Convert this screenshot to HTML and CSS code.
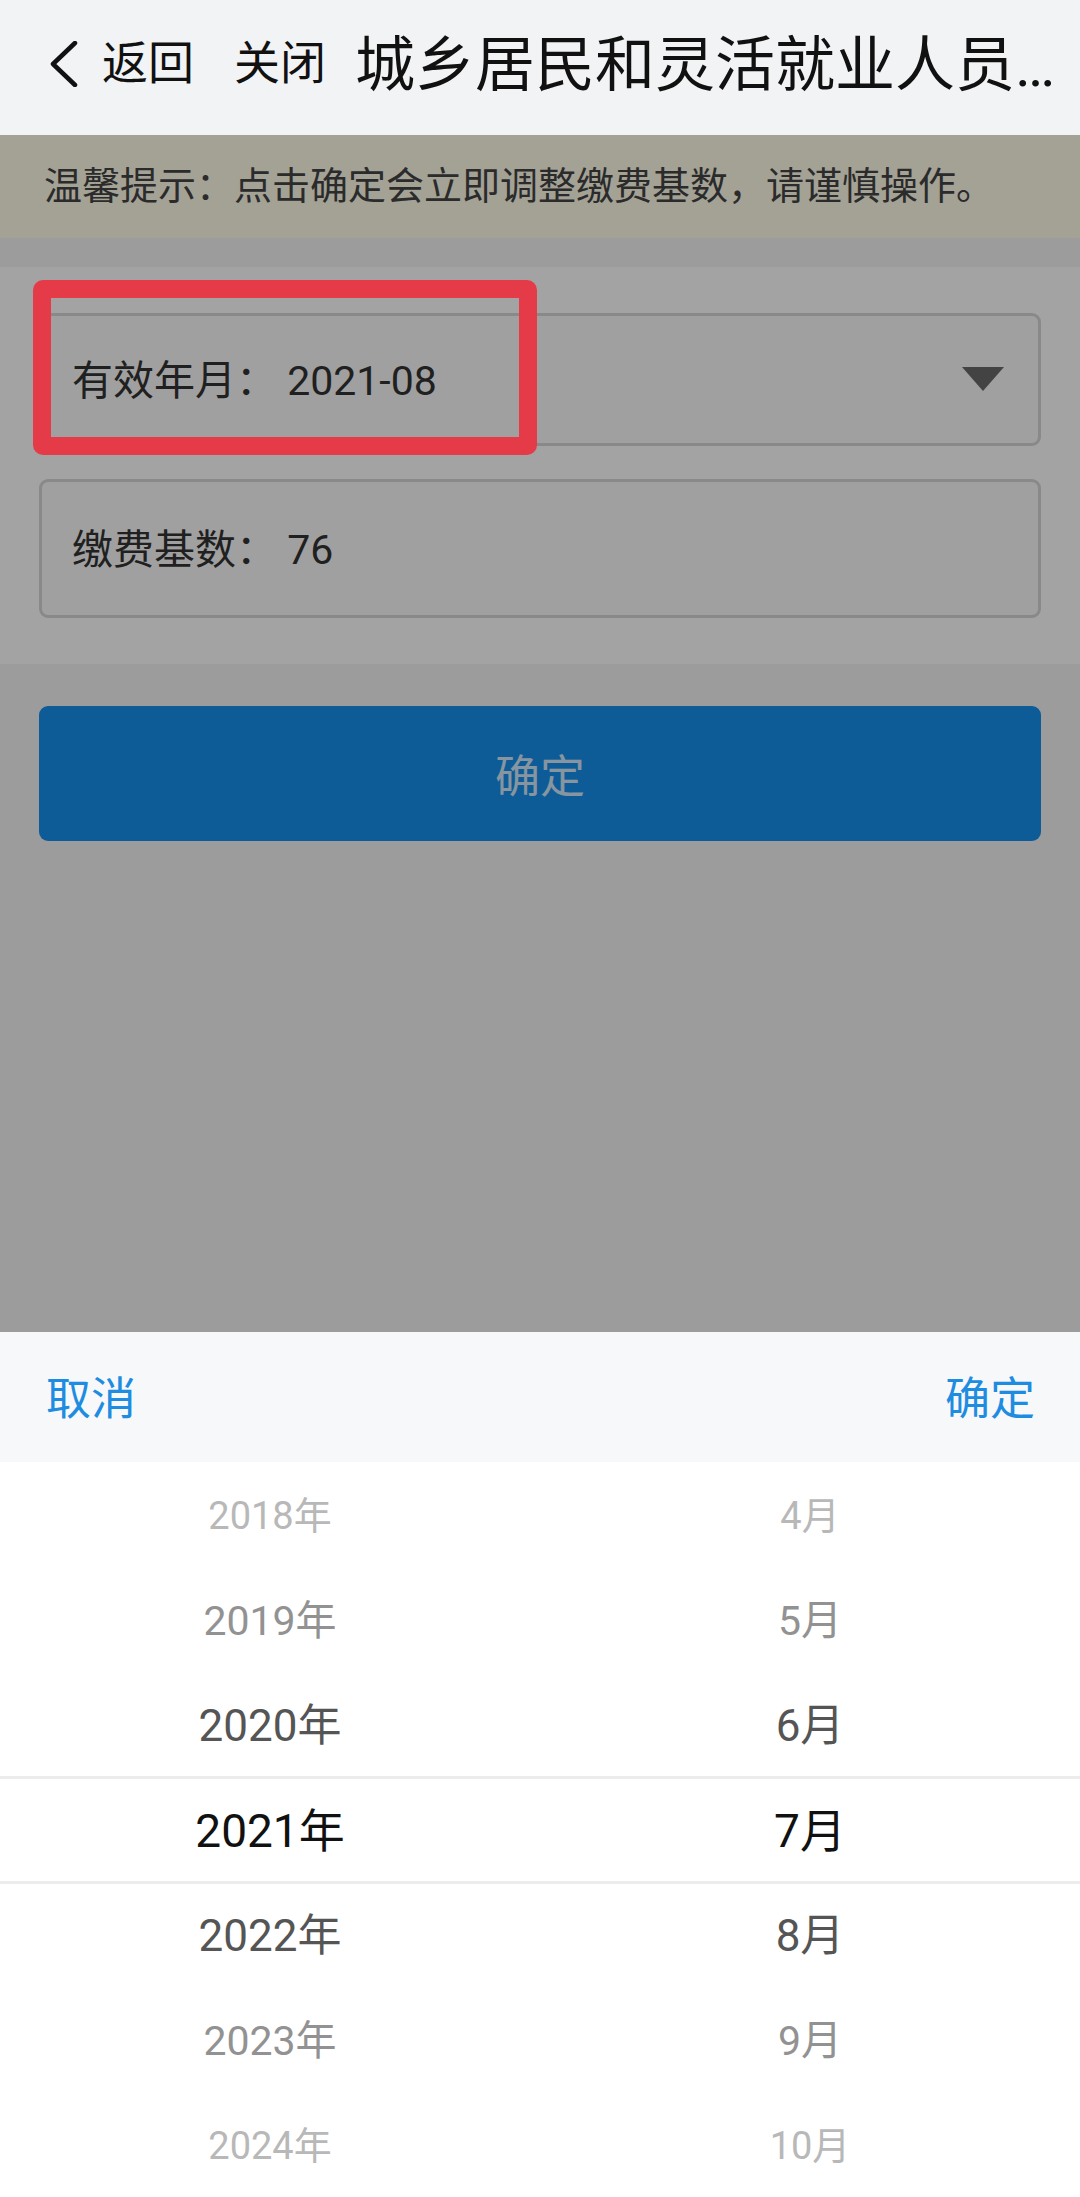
FILE: index.html
```html
<!DOCTYPE html>
<html lang="zh-CN">
<head>
<meta charset="utf-8">
<title>缴费基数调整</title>
<link rel="stylesheet" href="styles.css">
</head>
<body>
<header class="nav">
  <svg class="nav-back-icon" viewBox="0 0 30 46" width="30" height="46" aria-hidden="true">
    <polyline points="27,2 5,23 27,44" fill="none" stroke="#111" stroke-width="4.5" stroke-linecap="round" stroke-linejoin="round"/>
  </svg>
  <span class="nav-link nav-back">返回</span>
  <span class="nav-link nav-close">关闭</span>
  <h1 class="nav-title">城乡居民和灵活就业人员…</h1>
</header>

<main class="page">
  <div class="notice">温馨提示：点击确定会立即调整缴费基数，请谨慎操作。</div>

  <section class="form">
    <div class="field field-select">
      <span class="field-text">有效年月： 2021-08</span>
      <span class="caret"></span>
    </div>
    <div class="field field-input">
      <span class="field-text">缴费基数： 76</span>
    </div>
  </section>

  <div class="actions">
    <button class="btn-primary" type="button">确定</button>
  </div>
</main>

<div class="mask"></div>
<div class="highlight"></div>

<div class="sheet">
  <div class="sheet-toolbar">
    <span class="sheet-btn">取消</span>
    <span class="sheet-btn">确定</span>
  </div>
  <div class="wheels">
    <ul class="wheel">
      <li class="w3">2018年</li>
      <li class="w2">2019年</li>
      <li class="w1">2020年</li>
      <li class="w0">2021年</li>
      <li class="w1">2022年</li>
      <li class="w2">2023年</li>
      <li class="w3">2024年</li>
    </ul>
    <ul class="wheel">
      <li class="w3">4月</li>
      <li class="w2">5月</li>
      <li class="w1">6月</li>
      <li class="w0">7月</li>
      <li class="w1">8月</li>
      <li class="w2">9月</li>
      <li class="w3">10月</li>
    </ul>
    <div class="wheel-indicator"></div>
  </div>
</div>
</body>
</html>
```

FILE: styles.css
```css
* { box-sizing: border-box; }

html, body {
  margin: 0;
  padding: 0;
}

body {
  width: 1080px;
  height: 2197px;
  overflow: hidden;
  background: #f5f5f5;
  font-family: Roboto, "Noto Sans CJK SC", sans-serif;
  color: #333;
}

/* ---------- top navigation ---------- */
.nav {
  height: 135px;
  background: #f2f3f5;
  display: flex;
  align-items: center;
  padding: 0 16px 4px 48px;
  color: #111;
}

.nav-back-icon {
  flex: none;
  display: block;
  margin-bottom: 4px;
}

.nav-link {
  flex: none;
  font-size: 46px;
  line-height: 1;
  margin-bottom: 5px;
}

.nav-back { margin-left: 24px; }
.nav-close { margin-left: 40px; }

.nav-title {
  margin: 0 0 0 29px;
  flex: 1;
  min-width: 0;
  font-size: 60px;
  font-weight: 400;
  line-height: 1.2;
  white-space: nowrap;
}

/* ---------- page content (under mask) ---------- */
.page {
  display: flex;
  flex-direction: column;
}

.notice {
  height: 103px;
  background: #fffdea;
  color: #444;
  font-size: 38px;
  display: flex;
  align-items: center;
  padding: 0 0 8px 44px;
}

.form {
  margin-top: 29px;
  background: #fff;
  padding: 46px 39px 46px;
  display: flex;
  flex-direction: column;
  gap: 33px;
}

.field {
  display: flex;
  align-items: center;
  justify-content: space-between;
  background: #fafafa;
  border: 3px solid #d6d6d6;
  border-radius: 9px;
  padding: 0 34px 5px 30px;
  color: #333;
  font-size: 41px;
}

.field-select { height: 133px; }
.field-input { height: 139px; }

.caret {
  width: 0;
  height: 0;
  margin-top: 4px;
  border-left: 21px solid transparent;
  border-right: 21px solid transparent;
  border-top: 24px solid #6a6a6a;
}

.actions {
  padding: 42px 39px 0;
}

.btn-primary {
  display: block;
  width: 100%;
  height: 135px;
  border: 0;
  border-radius: 9px;
  background: #1790ec;
  color: rgba(255, 255, 255, 0.82);
  font-family: inherit;
  font-size: 45px;
  padding: 0;
}

/* ---------- modal mask ---------- */
.mask {
  position: fixed;
  top: 135px;
  left: 0;
  right: 0;
  bottom: 0;
  background: rgba(0, 0, 0, 0.36);
}

/* annotation frame drawn over the screenshot */
.highlight {
  position: absolute;
  left: 33px;
  top: 280px;
  width: 504px;
  height: 175px;
  border: 18px solid #e53a48;
  border-radius: 10px;
}

/* ---------- bottom picker sheet ---------- */
.sheet {
  position: fixed;
  left: 0;
  right: 0;
  bottom: 0;
  height: 865px;
  background: #fff;
  display: flex;
  flex-direction: column;
}

.sheet-toolbar {
  height: 130px;
  flex: none;
  background: #f7f8fa;
  display: flex;
  align-items: center;
  justify-content: space-between;
  padding: 0 45px 3px 46px;
}

.sheet-btn {
  font-size: 45px;
  color: #1e8ce0;
}

.wheels {
  position: relative;
  flex: 1;
  display: grid;
  grid-template-columns: 1fr 1fr;
}

.wheel {
  list-style: none;
  margin: 0;
  padding: 0;
  display: flex;
  flex-direction: column;
}

.wheel li {
  height: 105px;
  display: flex;
  align-items: center;
  justify-content: center;
  padding-bottom: 5px;
}

.w0 { font-size: 46px; color: #111; }
.w1 { font-size: 44px; color: #555; }
.w2 { font-size: 41px; color: #929292; }
.w3 { font-size: 38px; color: #b8b8b8; }

.wheel-indicator {
  position: absolute;
  left: 0;
  right: 0;
  top: 314px;
  height: 108px;
  border-top: 3px solid #ececec;
  border-bottom: 3px solid #ececec;
  pointer-events: none;
}
```
